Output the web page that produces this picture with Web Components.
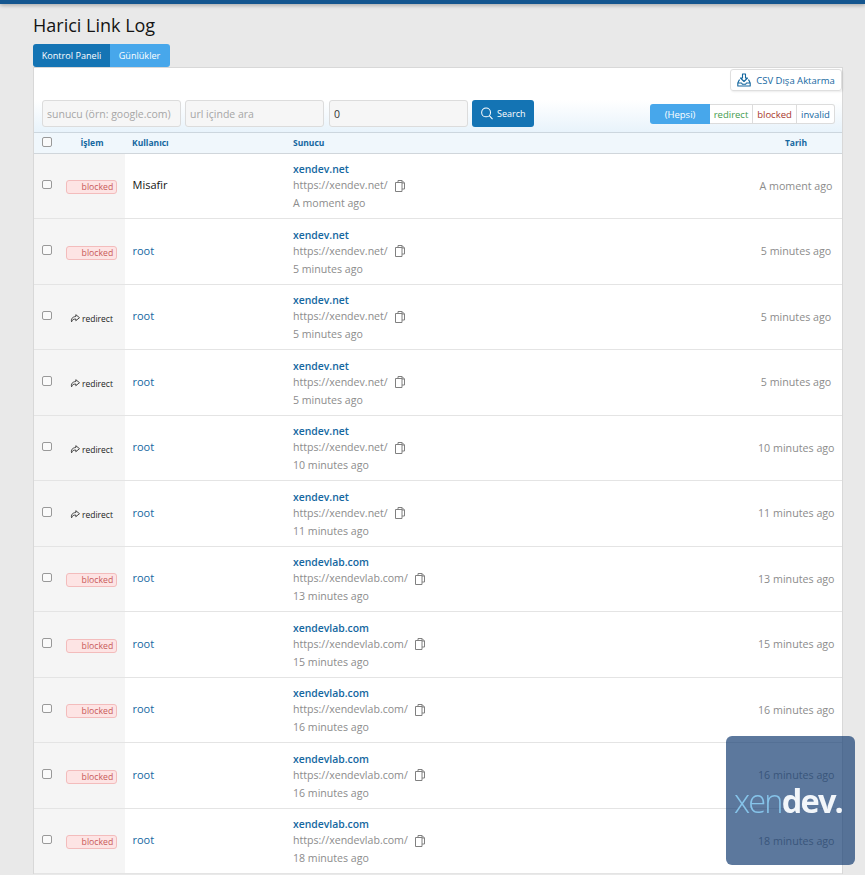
<!DOCTYPE html>
<html lang="tr">
<head>
<meta charset="utf-8">
<title>Harici Link Log</title>
<style>
    html, body { margin: 0; height: 875px; overflow: hidden; }
    body { background: #e9e9e9; font-family: "Open Sans", "Noto Sans", sans-serif; color: #141414; }
</style>
</head>
<body>
<log-page>
    <log-tabs slot="tabs"></log-tabs>
    <log-panel>
        <log-row action="blocked" guest user="Misafir" host="xendev.net" time="A moment ago"></log-row>
        <log-row action="blocked" user="root" host="xendev.net" time="5 minutes ago"></log-row>
        <log-row action="redirect" user="root" host="xendev.net" time="5 minutes ago"></log-row>
        <log-row action="redirect" user="root" host="xendev.net" time="5 minutes ago"></log-row>
        <log-row action="redirect" user="root" host="xendev.net" time="10 minutes ago"></log-row>
        <log-row action="redirect" user="root" host="xendev.net" time="11 minutes ago"></log-row>
        <log-row action="blocked" user="root" host="xendevlab.com" time="13 minutes ago"></log-row>
        <log-row action="blocked" user="root" host="xendevlab.com" time="15 minutes ago"></log-row>
        <log-row action="blocked" user="root" host="xendevlab.com" time="16 minutes ago"></log-row>
        <log-row action="blocked" user="root" host="xendevlab.com" time="16 minutes ago"></log-row>
        <log-row action="blocked" user="root" host="xendevlab.com" time="18 minutes ago"></log-row>
    </log-panel>
</log-page>
<xen-badge></xen-badge>

<script>
class LogPage extends HTMLElement {
    constructor() {
        super();
        this.attachShadow({ mode: "open" });
        this.shadowRoot.innerHTML = `
            <style>
                :host { display: block; }
                .bar { height: 4px; background: #14568f; box-shadow: 0 1px 4px rgba(0, 0, 0, .35); }
                .wrap { padding: 0 22px 0 33px; }
                h1 { margin: 0; padding-top: 9px; height: 31px; font-size: 18px; line-height: 25px; font-weight: 400; color: #141414; }
            </style>
            <div class="bar"></div>
            <div class="wrap">
                <h1>Harici Link Log</h1>
                <slot name="tabs"></slot>
                <slot></slot>
            </div>
        `;
    }
}

class LogTabs extends HTMLElement {
    constructor() {
        super();
        this.attachShadow({ mode: "open" });
        this.shadowRoot.innerHTML = `
            <style>
                :host { display: flex; height: 23px; font-size: 9.1px; color: #fff; }
                span { display: flex; align-items: center; justify-content: center; box-sizing: border-box; }
                .a { width: 77px; background: #1474b4; border-radius: 3px 0 0 3px; }
                .b { width: 60px; padding-right: 1px; background: #47a7eb; border-radius: 0 3px 3px 0; }
            </style>
            <span class="a">Kontrol Paneli</span><span class="b">Günlükler</span>
        `;
    }
}

class LogPanel extends HTMLElement {
    constructor() {
        super();
        this.attachShadow({ mode: "open" });
        this.shadowRoot.innerHTML = `
            <style>
                :host { display: block; background: #fff; border: 1px solid #d8d8d8; border-bottom: 0; }
                .top { display: flex; justify-content: flex-end; height: 32px; padding: 1px 0 0; box-sizing: border-box; }
                .csv { display: flex; align-items: center; gap: 5px; height: 22px; box-sizing: border-box; width: 112px; justify-content: center;
                    border: 1px solid #dfdfdf; border-radius: 3px; font-size: 9.5px; color: #14679f; box-shadow: 1px 1px 2px rgba(0, 0, 0, .08); }
                .filters { display: flex; align-items: flex-start; height: 33px; box-sizing: border-box; padding: 0 7px 0 8px;
                    background: linear-gradient(#fff, #e8f3fb); border-bottom: 1px solid #ccd6de; }
                input { box-sizing: border-box; height: 27px; margin: 0 4px 0 0; padding: 1px 4px 0; font: 10.5px "Open Sans", sans-serif; border: 1px solid #dcdcdc; border-radius: 3px; background: #f6f6f6; color: #333; outline: 0; }
                input::placeholder { color: #a6a6a6; opacity: 1; }
                .i1, .i2, .i3 { width: 139px; }
                .i2 { margin-right: 5px; }
                .search { display: flex; align-items: center; gap: 4px; box-sizing: border-box; width: 62px; height: 27px; padding-left: 9px; background: #1474b4; color: #fff; border-radius: 3px; font-size: 9px; }
                .seg { display: flex; height: 20px; margin: 4px 0 0 auto; font-size: 9.5px; border-radius: 3px; }
                .seg span { display: flex; align-items: center; justify-content: center; box-sizing: border-box; background: #fff; border: 1px solid #dcdcdc; border-left: 0; }
                .seg .all { width: 60px; background: #47a7eb; color: #fff; border: 0; border-radius: 3px 0 0 3px; }
                .seg .r { width: 43px; color: #3f9b4e; }
                .seg .b { width: 44px; color: #a8372c; }
                .seg .v { width: 38px; color: #14679f; border-radius: 0 3px 3px 0; }
                .head { display: grid; grid-template-columns: 31px 60px 161px 1fr 76px; align-items: center; height: 20.5px; box-sizing: border-box;
                    padding-right: 8px; background: #f0f7fc; border-bottom: 1px solid #d0d6db; font-size: 8.5px; font-weight: 700; color: #14679f; }
                .head > :nth-child(2) { text-align: center; padding-right: 6px; }
                .head > :nth-child(3), .head > :nth-child(4) { padding-left: 7px; }
                .head > :nth-child(5) { text-align: center; }
                .cb { width: 9.5px; height: 9.5px; margin: -2px 0 0 8px; border: 1px solid #999; border-radius: 2px; background: #fafafa; box-sizing: border-box; }
                svg { display: block; }
            </style>
            <div class="top">
                <div class="csv">
                    <svg width="14" height="14" viewBox="0 0 14 14" fill="none" stroke="#14679f" stroke-width="1.100" stroke-linejoin="round">
                        <path d="M5.500 1h3v4h2L7 8.500 3.500 5h2zM3 7H2.200L.8 10v3h12.400v-3L11.800 7H11M.8 10h3.700l1 1.300h3l1-1.300h3.700"/>
                    </svg>
                    CSV Dışa Aktarma
                </div>
            </div>
            <div class="filters">
                <input class="i1" placeholder="sunucu (örn: google.com)">
                <input class="i2" placeholder="url içinde ara">
                <input class="i3" value="0">
                <div class="search">
                    <svg width="12" height="13" viewBox="0 0 13 14" fill="none" stroke="#fff" stroke-width="1.100"><circle cx="5.500" cy="5.800" r="4.800"/><path d="M9 9.300l3.500 3.700"/></svg>
                    Search
                </div>
                <div class="seg">
                    <span class="all">(Hepsi)</span><span class="r">redirect</span><span class="b">blocked</span><span class="v">invalid</span>
                </div>
            </div>
            <div class="head">
                <div class="cb"></div><div>İşlem</div><div>Kullanıcı</div><div>Sunucu</div><div>Tarih</div>
            </div>
            <slot></slot>
        `;
    }
}

class LogRow extends HTMLElement {
    constructor() {
        super();
        this.attachShadow({ mode: "open" });
    }

    connectedCallback() {
        const action = this.getAttribute("action");
        const host = this.getAttribute("host");
        const user = this.getAttribute("user");
        const time = this.getAttribute("time");
        const badge = action === "blocked"
            ? `<span class="pill">blocked</span>`
            : `<span class="redir"><svg width="10" height="9" viewBox="0 0 10 9" fill="none" stroke="#333" stroke-width=".9" stroke-linejoin="round"><path d="M5.800 .7L9.500 3.700 5.800 6.700V5C3.500 5 2.200 5.700 1.600 7.800 .7 5 2.400 2.800 5.800 2.500z"/></svg>redirect</span>`;
        this.shadowRoot.innerHTML = `
            <style>
                :host { display: grid; grid-template-columns: 91px 161px 1fr 84px; height: 65.5px; box-sizing: border-box; border-bottom: 1px solid #e4e4e4; font-size: 11px; }
                .act { display: flex; align-items: center; background: #f5f5f5; padding-bottom: 3px; box-sizing: border-box; }
                .cb { width: 9.5px; height: 9.5px; margin: .6px 0 0 8px; flex: none; border: 1px solid #999; border-radius: 2px; background: #fafafa; box-sizing: border-box; }
                .slot { flex: 1; display: flex; justify-content: center; padding: 5.600px 0 0 5px; }
                .pill { display: block; box-sizing: border-box; width: 51px; height: 14px; line-height: 13px; margin-left: 2px; padding-right: 3px; text-align: right; font-size: 8.7px;
                    color: #c85a5a; background: #fde4e4; border: 1px solid #f3bcbc; border-radius: 3px; }
                .redir { display: flex; align-items: center; gap: 2.500px; font-size: 8.5px; color: #222; margin-left: 1px; }
                .user { align-self: center; padding: .6px 0 3px 7.500px; color: ${this.hasAttribute("guest") ? "#141414" : "#14679f"}; }
                .srv { padding: 8.700px 0 0 7px; line-height: 15px; color: #8c8c8c; font-size: 10.600px; }
                .host { display: block; color: #14679f; font-size: 10.400px; font-weight: 600; }
                .url { display: flex; align-items: center; gap: 7.500px; margin-top: 1px; }
                .ago { display: block; margin-top: 3px; }
                .date { align-self: center; width: 76px; text-align: center; color: #8c8c8c; font-size: 10.700px; white-space: nowrap; }
                svg { display: block; }
            </style>
            <div class="act"><div class="cb"></div><div class="slot">${badge}</div></div>
            <div class="user">${user}</div>
            <div class="srv">
                <span class="host">${host}</span>
                <span class="url">https://${host}/
                    <svg width="10" height="12" viewBox="0 0 10 12" fill="none" stroke="#808080" stroke-width="1"><path d="M3 2.500V.5h4l2.500 2.500v6H7M.5 2.500H7v9H.5zM7 .5v2.500h2.500"/></svg>
                </span>
                <span class="ago">${time}</span>
            </div>
            <div class="date">${time}</div>
        `;
    }
}

class XenBadge extends HTMLElement {
    constructor() {
        super();
        this.attachShadow({ mode: "open" });
        this.shadowRoot.innerHTML = `
            <style>
                :host { position: fixed; left: 726px; top: 736px; width: 129px; height: 129px; box-sizing: border-box; padding-right: 5px; display: flex; align-items: center; justify-content: center;
                    background: rgba(23, 62, 116, .7); border-radius: 6px; font-family: "Open Sans", sans-serif; font-size: 32.500px; letter-spacing: -1.800px; }
                .x { color: #86c4ea; font-weight: 300; }
                .d { color: #f2f6fa; font-weight: 700; }
            </style>
            <div><span class="x">xen</span><span class="d">dev.</span></div>
        `;
    }
}

customElements.define("log-page", LogPage);
customElements.define("log-tabs", LogTabs);
customElements.define("log-panel", LogPanel);
customElements.define("log-row", LogRow);
customElements.define("xen-badge", XenBadge);
</script>
</body>
</html>
